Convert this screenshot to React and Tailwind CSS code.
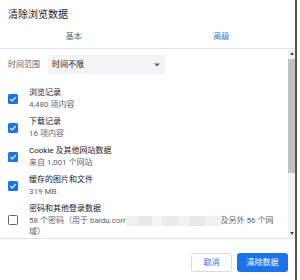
import React from "react";

const font = { fontFamily: 'Roboto, "Noto Sans CJK SC", sans-serif' };

function Check({ checked }) {
  if (!checked) {
    return <div className="w-[10px] h-[10px] shrink-0 rounded-[1.5px] border-[1.5px] border-[#5f6368] bg-white" />;
  }
  return (
    <div className="w-[10px] h-[10px] shrink-0 rounded-[1.5px] bg-[#1a73e8] flex items-center justify-center">
      <svg width="8" height="8" viewBox="0 0 8 8">
        <path d="M1.3 4.1 L3.2 6 L6.8 2.2" stroke="white" strokeWidth="1.2" fill="none" />
      </svg>
    </div>
  );
}

function Item({ checked, title, children }) {
  return (
    <div className="flex items-center gap-[11px] pl-[8px]">
      <Check checked={checked} />
      <div className="flex flex-col">
        <div className="text-[8px] leading-[12px] text-[#202124] whitespace-nowrap">{title}</div>
        {children}
      </div>
    </div>
  );
}

function Sub({ children }) {
  return <div className="text-[8px] leading-[11px] text-[#5f6368] whitespace-nowrap flex items-center">{children}</div>;
}

export default function App() {
  return (
    <div className="w-[300px] h-[280px] bg-white flex overflow-hidden" style={font}>
      <div className="w-[295px] flex flex-col">
        <div className="h-[26px] pl-[8px] pt-[9px] text-[10px] leading-[12px] text-[#202124]">清除浏览数据</div>
        <div className="h-[23px] flex border-b border-[#e3e3e3]">
          <div className="flex-1 flex items-center justify-center text-[8px] text-[#5f6368]">基本</div>
          <div className="flex-1 flex items-center justify-center text-[8px] text-[#1a73e8]">高级</div>
        </div>
        <div className="h-[189px] flex">
          <div className="flex-1 overflow-hidden pt-[6px]">
            <div className="flex items-center h-[19px]">
              <div className="w-[48px] pl-[8px] text-[8px] text-[#5f6368]">时间范围</div>
              <div className="w-[117px] h-[19px] bg-[#f1f3f4] rounded-[3px] flex items-center justify-between pl-[4px] pr-[5px]">
                <span className="text-[8px] text-[#202124]">时间不限</span>
                <svg width="6" height="4" viewBox="0 0 6 4">
                  <path d="M0 0.5 H6 L3 3.5 Z" fill="#5f6368" />
                </svg>
              </div>
            </div>
            <div className="mt-[13px] flex flex-col gap-[6px]">
              <Item checked title="浏览记录"><Sub>4,480 项内容</Sub></Item>
              <Item checked title="下载记录"><Sub>16 项内容</Sub></Item>
              <Item checked title="Cookie 及其他网站数据"><Sub>来自 1,001 个网站</Sub></Item>
              <Item checked title="缓存的图片和文件"><Sub>319 MB</Sub></Item>
              <Item checked={false} title="密码和其他登录数据">
                <Sub>
                  <span>58 个密码（用于 baidu.com</span>
                  <span className="inline-flex h-[10px] w-[95px] ml-[-2px]">
                    <span className="w-[12px] bg-[#f0f0f0]" />
                    <span className="w-[14px] bg-[#e9e9e9]" />
                    <span className="w-[10px] bg-[#f3f3f3]" />
                    <span className="w-[16px] bg-[#ebebeb]" />
                    <span className="w-[12px] bg-[#f2f2f2]" />
                    <span className="w-[15px] bg-[#e8e8e8]" />
                    <span className="w-[16px] bg-[#f1f1f1]" />
                  </span>
                  <span>及另外 56 个网</span>
                </Sub>
                <Sub>域）</Sub>
              </Item>
            </div>
          </div>
          <div className="w-[7px] bg-[#f1f1f1] flex flex-col items-center">
            <div className="h-[9px] flex items-center justify-center">
              <svg width="4" height="3" viewBox="0 0 4 3"><path d="M0 3 L2 0 L4 3 Z" fill="#505050" /></svg>
            </div>
            <div className="w-[7px] h-[114px] bg-[#c1c1c1] mt-[1px]" />
            <div className="flex-1" />
            <div className="h-[9px] flex items-center justify-center">
              <svg width="4" height="3" viewBox="0 0 4 3"><path d="M0 0 L4 0 L2 3 Z" fill="#505050" /></svg>
            </div>
          </div>
        </div>
        <div className="flex-1 border-t border-[#e3e3e3] flex justify-end items-start pt-[14px] pr-[7px] gap-[5px]">
          <div className="w-[41px] h-[19px] rounded-[3px] border border-[#dadce0] flex items-center justify-center text-[8px] text-[#1a73e8]">取消</div>
          <div className="w-[51px] h-[19px] rounded-[3px] bg-[#1a73e8] flex items-center justify-center text-[8px] text-white">清除数据</div>
        </div>
      </div>
      <div className="w-[2px] bg-[#555555]" />
      <div className="w-[3px] bg-white" />
    </div>
  );
}
